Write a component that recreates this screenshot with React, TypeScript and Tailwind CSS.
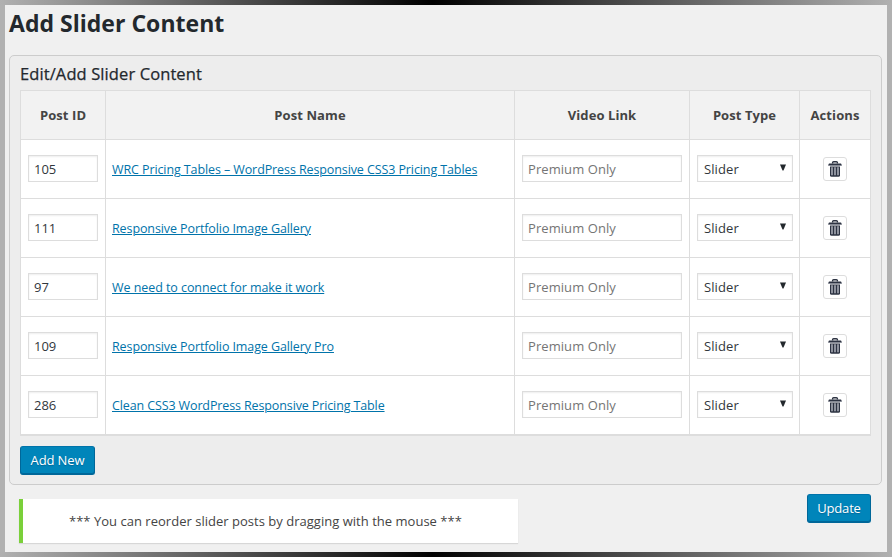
import React from "react";

const rows = [
  { id: "105", name: "WRC Pricing Tables – WordPress Responsive CSS3 Pricing Tables", tracking: "tracking-[-0.1px]" },
  { id: "111", name: "Responsive Portfolio Image Gallery", tracking: "tracking-[-0.1px]" },
  { id: "97", name: "We need to connect for make it work", tracking: "tracking-[-0.06px]" },
  { id: "109", name: "Responsive Portfolio Image Gallery Pro", tracking: "tracking-[-0.1px]" },
  { id: "286", name: "Clean CSS3 WordPress Responsive Pricing Table", tracking: "tracking-[-0.12px]" },
];

const columns = "grid grid-cols-[85px_409px_175px_110px_71px]";
const field = "flex h-[27px] items-center border border-[#ddd] bg-white pl-[5px] pt-px shadow-[inset_0_1px_2px_rgba(0,0,0,0.07)]";
const head = "flex items-center justify-center border-l border-[#ddd] pt-px tracking-[0.08px]";
const cell = "border-l border-[#ddd] pt-[15px]";

function Trash() {
  return (
    <svg width="14" height="18" viewBox="0 0 14 18" fill="none">
      <path d="M4.6 3.6V2.6Q4.6 1.7 5.6 1.7H8.4Q9.4 1.7 9.4 2.6V3.6" stroke="#2d3342" strokeWidth="1.4" />
      <path d="M1 3.6H13L14 5.6H0Z" fill="#2d3342" />
      <path d="M0.6 5.5H13.4" stroke="#7c818d" strokeWidth="0.6" />
      <path d="M2 6.6H12V15.2Q12 16.7 10.5 16.7H3.5Q2 16.7 2 15.2Z" fill="#2d3342" />
      <path d="M4 7.3V15.2M7 7.3V15.2M10 7.3V15.2" stroke="#c3c6ce" strokeWidth="1.3" />
    </svg>
  );
}

function Button({ children, className }: { children: React.ReactNode; className: string }) {
  return (
    <button
      className={`flex h-[29px] items-center justify-center rounded-[3px] border border-[#006799] border-t-[#0073aa] bg-[#0085ba] pb-px text-white shadow-[inset_0_-1px_0_#006799] [text-shadow:0_1px_1px_#006799] ${className}`}
    >
      {children}
    </button>
  );
}

export default function App() {
  return (
    <div className="h-[557px] w-[892px] bg-[#b1b1b1] bg-[linear-gradient(90deg,#b1b1b1_0%,#000_48.5%,#b1b1b1_100%)] py-[5px] font-['Open_Sans','Noto_Sans',sans-serif] text-[13px] leading-none text-[#444]">
      <div className="h-[547px] border-x-[5px] border-[#b1b1b1] bg-[#f0f0f0] pl-1 pr-[5px]">
        <h1 className="h-[50px] whitespace-nowrap pt-[6px] text-[23px] font-bold leading-[24px] tracking-[0.02px] text-[#23282d]">
          <span>Add Slider Content</span>
        </h1>
        <section className="h-[430px] rounded-[5px] border border-[#ccc] bg-[#ededed] px-[10px]">
          <h2 className="h-[34px] pt-[8px] text-[16.5px] leading-[20px] tracking-[0.1px] text-[#23282d] [-webkit-text-stroke:0.25px_#23282d]">
            <span>Edit/Add Slider Content</span>
          </h2>
          <div className="border-b-2 border-r border-[#ddd]">
            <div className={`${columns} h-[49px] border-t border-[#ddd] bg-[#f2f2f2] font-bold`}>
              <div className={head}><span>Post ID</span></div>
              <div className={head}><span>Post Name</span></div>
              <div className={head}><span>Video Link</span></div>
              <div className={head}><span>Post Type</span></div>
              <div className={head}><span>Actions</span></div>
            </div>
            {rows.map((row) => (
              <div key={row.id} className={`${columns} h-[59px] border-t border-[#ddd] bg-white`}>
                <div className={`${cell} pl-[7px]`}>
                  <div className={`${field} w-[70px] text-[#32373c]`}><span>{row.id}</span></div>
                </div>
                <div className={`${cell} pl-[6px]`}>
                  <a className="flex h-[27px] items-center whitespace-nowrap pt-[3px] text-[#0073aa] underline decoration-1 underline-offset-1" href="#">
                    <span className={`text-[12.5px] ${row.tracking}`}>{row.name}</span>
                  </a>
                </div>
                <div className={`${cell} pl-[7px]`}>
                  <div className={`${field} w-[160px] tracking-[0.07px] text-[#757575]`}><span>Premium Only</span></div>
                </div>
                <div className={`${cell} pl-[7px]`}>
                  <div className={`${field} w-[96px] justify-between pr-[6px] text-[#32373c]`}>
                    <span className="pl-px tracking-[0.1px]">Slider</span>
                    <svg width="6" height="7" viewBox="0 0 6 7" className="mb-[4px]"><path d="M0 0.5H6L3.5 6.5H2.5Z" fill="#23282d" /></svg>
                  </div>
                </div>
                <div className="border-l border-[#ddd] pl-[23px] pt-[17px]">
                  <div className="flex h-6 w-6 items-center justify-center rounded-[3px] border border-[#ddd]"><Trash /></div>
                </div>
              </div>
            ))}
          </div>
          <Button className="mt-[10px] w-[75px] tracking-[-0.1px]"><span>Add New</span></Button>
        </section>
        <div className="flex justify-between pl-[10px] pr-[11px] pt-[9px]">
          <div className="mt-[5px] flex h-[44px] w-[499px] items-center border-l-4 border-[#7ad03a] bg-white pl-[46px] tracking-[0.02px] shadow-[0_1px_1px_rgba(0,0,0,0.1)]">
            <span>*** You can reorder slider posts by dragging with the mouse ***</span>
          </div>
          <Button className="w-16 tracking-[-0.2px]"><span>Update</span></Button>
        </div>
      </div>
    </div>
  );
}
